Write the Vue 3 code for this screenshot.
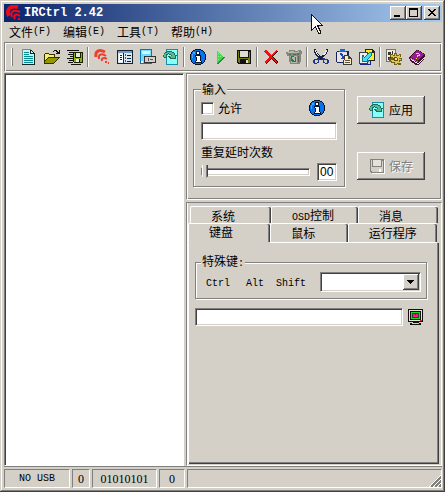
<script setup>
import { ref } from 'vue'

const menus = [
  { name: '文件', key: '(F)' },
  { name: '编辑', key: '(E)' },
  { name: '工具', key: '(T)' },
  { name: '帮助', key: '(H)' },
]
const toolGroups = [
  ['new', 'open', 'saveall'],
  ['waves', 'list', 'panel', 'apply'],
  ['info', 'play', 'floppy'],
  ['delete', 'trash'],
  ['cut', 'paste', 'export'],
  ['settings', 'book'],
]
const tabRows = [
  [
    { cjk: '系统', grow: 60 },
    { latin: 'OSD', cjk: '控制', grow: 66 },
    { cjk: '消息', grow: 59 },
  ],
  [
    { cjk: '键盘', grow: 62 },
    { cjk: '鼠标', grow: 57 },
    { cjk: '运行程序', grow: 69 },
  ],
]
const activeTab = ref('键盘')
const allowed = ref(false)
const inputCode = ref('')
const delay = ref(0)
const keyText = ref('')
const specialKey = ref('')
</script>

<template>
  <svg class="sprite" aria-hidden="true">
    <symbol id="new" viewBox="0 0 16 16" shape-rendering="crispEdges">
      <path fill="#bff4f0" d="M2 1h8l3 3v11H2z" />
      <path fill="#6f8d8c" d="M1 0h9v1H2v14H1z" />
      <path fill="#102828" d="M10 1h1v1h1v1h1v1h1v12H1v-1h12V5H9V1h1v3h2V3h-1V2h-1z" />
      <path fill="#078b91" d="M3 3h5v1H3zM3 5h5v1H3zM3 7h9v1H3zM3 9h9v1H3zM3 11h9v1H3zM3 13h9v1H3z" />
    </symbol>
    <symbol id="open" viewBox="0 0 16 16" shape-rendering="crispEdges">
      <path fill="#303000" d="M0 5h1V4h4v1h6v3h5v1h-1v1h-1v1h-1v1h-1v1h-1v1h-1v1H0z" />
      <path fill="#f6ed71" d="M1 5h4v1h5v2H4v1H3v1H2v1H1z" />
      <path fill="#969600" d="M4 9h10v1h-1v1h-1v1h-1v1h-1v1H1v-2h1v-1h1v-1h1z" />
      <path fill="#111" d="M9 2h1V1h3v1h1v1h1V1h1v4h-4V4h1V3h-1V2h-2v1H9z" />
    </symbol>
    <symbol id="saveall" viewBox="0 0 16 16" shape-rendering="crispEdges">
      <path fill="#111" d="M0 1h12v1H0zM2 3h5v1H2zM1 5h5v1H1zM3 7h3v1H3zM0 9h6v1H0zM2 11h4v1H2zM1 13h5v1H1zM4 15h10v1H4z" />
      <path fill="#182000" d="M6 3h10v11H7v-1H6z" />
      <path fill="#8eae1b" d="M7 4h1v5h6V4h1v9H7z" />
      <path fill="#e5e8dc" d="M9 4h4v4H9zM9 10h3v3H9z" />
      <path fill="#111" d="M12 10h1v3h-1z" />
    </symbol>
    <symbol id="waves" viewBox="0 0 16 16">
      <g fill="none" stroke="#ee3e2d" stroke-width="2">
        <path stroke-width="3" d="M2 8C1 2 5 0 11 3" />
        <path d="M5 10C4 5 8 4 12 7" />
        <path d="M8 12c-1-3 2-4 5-2" />
      </g>
      <path fill="#ee3e2d" d="M11 12h2v2h-2zM14 13h1v2h-1z" />
    </symbol>
    <symbol id="logo" viewBox="0 0 16 16">
      <g fill="none" stroke="#f00916" stroke-width="2">
        <path stroke-width="4" d="M3 11C0 5 4 0 12 2" />
        <path d="M6 12C4 7 7 4 14 7" />
        <path d="M9 14c-2-4 1-6 5-3" />
      </g>
      <path fill="#f00916" d="M12 13h2v2h-2z" />
    </symbol>
    <symbol id="list" viewBox="0 0 16 16" shape-rendering="crispEdges">
      <path fill="#142331" d="M0 1h16v14H0z" />
      <path fill="#d9e7f5" d="M1 4h14v10H1z" />
      <path fill="#7795c5" d="M1 2h14v2H1z" />
      <path fill="#fff" d="M2 5h4v8H2z" />
      <path fill="#142331" d="M6 4h1v10H6zM3 6h2v1H3zM3 8h2v1H3zM3 10h2v1H3zM10 6h4v1h-4zM10 9h4v1h-4zM10 12h4v1h-4z" />
      <path fill="#3062a1" d="M8 5h1v2H8zM8 8h1v2H8zM8 11h1v2H8z" />
    </symbol>
    <symbol id="panel" viewBox="0 0 16 16" shape-rendering="crispEdges">
      <path fill="#0879b5" d="M0 0h12v15H0z" />
      <path fill="#70dcff" d="M1 1h10v10H8v3H3v-2H1z" />
      <path fill="#c8faff" d="M2 2h8v3H2z" />
      <path fill="#fff" d="M1 12h2v2H1z" />
      <path fill="#303030" d="M4 7h12v7H4z" />
      <path fill="#d2d0c8" d="M5 8h10v5H5z" />
      <path fill="#555" d="M8 9h1v3H8zM10 10h3v1h-3z" />
    </symbol>
    <symbol id="apply" viewBox="0 0 16 16" shape-rendering="crispEdges">
      <path fill="#168cab" d="M3 0h12v16H3z" />
      <path fill="#87fffa" d="M4 1h10v14H4z" />
      <path fill="#1f6a58" d="M0 6h1V4h1V3h2V2h5v1h2v1h1v2h2v1h-1v3H7V9H6V8H5V7h3V6H6V5H5v1H4v3H1V8H0z" />
      <path fill="#56b894" d="M1 5h1V4h2V3h5v1h2v2h1v3H8V8H7V7h2V6H8V5H6V4H5v1H3v3H1z" />
    </symbol>
    <symbol id="info" viewBox="0 0 16 16" shape-rendering="crispEdges">
      <path fill="#071222" d="M5 0h6v1h2v1h1v1h1v2h1v6h-1v2h-1v1h-1v1h-2v1H5v-1H3v-1H2v-1H1v-2H0V5h1V3h1V2h1V1h2z" />
      <path fill="#0872ee" d="M5 1h6v1h2v1h1v2h1v6h-1v2h-1v1h-2v1H5v-1H3v-1H2v-2H1V5h1V3h1V2h2z" />
      <path fill="#45a5ff" d="M3 3h2v2H3zM2 5h1v4H2z" />
      <path fill="#071222" d="M6 2h4v4h1v6h1v2H5v-2h1V8H5V6h1z" />
      <path fill="#fff" d="M7 3h2v2H7zM6 7h4v5h1v1H6v-1h1V8H6z" />
    </symbol>
    <symbol id="play" viewBox="0 0 16 16" shape-rendering="crispEdges">
      <path fill="#42dc4e" d="M4 2h1v1h1v1h1v1h1v1h1v1h1v1h1v1h-1v1H9v1H8v1H7v1H6v1H5v1H4z" />
      <path fill="#159332" d="M12 9h-1v1h-1v1H9v1H8v1H7v1H6v1H4v-1h1v-1h1v-1h1v-1h1v-1h1V9h1V8h2z" />
      <path fill="#88f682" d="M5 4h1v1H5zM5 7h1v1H5zM7 7h1v1H7zM5 10h1v1H5z" />
    </symbol>
    <symbol id="floppy" viewBox="0 0 16 16" shape-rendering="crispEdges">
      <path fill="#111" d="M1 1h14v14H2v-1H1z" />
      <path fill="#777a10" d="M2 2h1v7h10V3h1v11H3v-1H2z" />
      <path fill="#dedbd2" d="M4 2h8v6H4z" />
      <path fill="#111" d="M4 10h8v4H4zM13 2h1v1h-1z" />
      <path fill="#dedbd2" d="M10 11h2v3h-2z" />
    </symbol>
    <symbol id="floppyoff" viewBox="0 0 16 16" shape-rendering="crispEdges">
      <path fill="#fff" d="M2 2h14v14H3v-1H2z" />
      <path fill="#858279" d="M1 1h14v14H2v-1H1z" />
      <path fill="#d4d0c8" d="M2 2h1v7h10V3h1v11H3v-1H2z" />
      <path fill="#e5e2dc" d="M4 2h8v6H4z" />
      <path fill="#fff" d="M10 11h2v3h-2z" />
    </symbol>
    <symbol id="delete" viewBox="0 0 16 16" shape-rendering="crispEdges">
      <path fill="#240d0b" d="M2 3l2-1 4 4 5-5 2 1-5 6 5 5-2 2-5-5-5 5-2-2 5-5z" />
      <path fill="#f50e10" d="M1 2l2-1 5 5 5-5h1v1L9 8l5 5-1 1-5-5-5 5-2-1 5-5-5-5z" />
    </symbol>
    <symbol id="trash" viewBox="0 0 16 16" shape-rendering="crispEdges">
      <path fill="#85877f" d="M0 3h3V1h6v1h3V1h3v1h1v3h-1v8h-1v2H4v-2H3V7H1V5H0z" />
      <path fill="#b5b8ad" d="M1 3h3V2h4v1h4V2h1v2H2zM4 7h7v7H5V8H4z" />
      <path fill="#62655d" d="M3 5h2v1H3zM7 5h3v1H7zM11 4h2v2h-2zM12 7h1v6h-1z" />
      <path fill="#0b8c3c" d="M5 7h3v1H6v2h1v1H5zM9 8h1v5H8v-1h1zM5 11h3v2H6v-1H5z" />
    </symbol>
    <symbol id="cut" viewBox="0 0 16 16" shape-rendering="crispEdges">
      <path fill="#172038" d="M1 0h2v2h1v2h1v1h1v1h1v1h2V6h1V5h1V4h1V2h1V0h2v3h-1v2h-1v1h-1v1h-1v1h-1v1h-1v2H6V9H5V8H4V7H3V6H2V4H1z" />
      <path fill="#eee" d="M2 1h1v2h1v2h1v1h1v1H5V6H4V5H3V3H2zM13 1h1v2h-1v2h-1v1h-2V5h1V4h1V2h1z" />
      <path fill="#22358d" d="M1 10h3V9h3v2H6v3H4v1H1v-1H0v-3h1zm1 1v3h2v-1h1v-2zM9 9h3v1h3v1h1v3h-1v1h-3v-1h-2v-3H9zm2 2v2h1v1h2v-3z" />
    </symbol>
    <symbol id="paste" viewBox="0 0 16 16" shape-rendering="crispEdges">
      <path fill="#17225f" d="M1 2h12v4H8v8H1v-1H0V3h1z" />
      <path fill="#e8e5dd" d="M1 3h10v3H8v7H1z" />
      <path fill="#116bd9" d="M3 2h1V0h5v2h1v1H3z" />
      <path fill="#1c3fc4" d="M4 4h2v1h1v2h1v1h1v2H5V9h1V7H5V6H4z" />
      <path fill="#3a3a30" d="M8 6h5v1h1v1h1v1h1v7H7v-5h1z" />
      <path fill="#f9edba" d="M9 7h3v3h3v5H8v-4h1z" />
      <path fill="#55533f" d="M12 7h1v2h2v1h-3zM9 11h5v1H9zM9 13h5v1H9z" />
    </symbol>
    <symbol id="export" viewBox="0 0 16 16" shape-rendering="crispEdges">
      <path fill="#222" d="M6 0h8v1h1v1h1v10H6z" />
      <path fill="#ffed19" d="M7 1h6v3h2v7H7z" />
      <path fill="#3e4147" d="M0 3h9v12H0z" />
      <path fill="#eee" d="M1 4h7v10H1z" />
      <path fill="#127889" d="M3 13V6h2v2l5-5h3v3l-5 5h2v2z" />
      <path fill="#44dcfa" d="M4 12V8h1v1l5-5h2v2L7 11h1v1z" />
      <path fill="#18228a" d="M1 15h10v-3h1v4H1z" />
    </symbol>
    <symbol id="settings" viewBox="0 0 16 16" shape-rendering="crispEdges">
      <path fill="#73736f" d="M0 0h10v13H0z" />
      <path fill="#eeece4" d="M1 1h8v11H1z" />
      <path fill="#333" d="M2 3h3v3H2zM6 2h1v5H6zM2 8h3v3H2z" />
      <path fill="#74621b" d="M8 4h3v2h2V5h2v3h-1v1h2v3h-2v2h1v2h-3v-1h-1v1H8v-2H5v-2H3V9h2V8H4V5h3v1h1z" />
      <path fill="#dec650" d="M9 5h1v2h3V6h1v3h-1v1h2v1h-2v2h1v1h-3v1H9v-2H6v-1H5v-1h2V8H5V6h2v1h2z" />
      <path fill="#625213" d="M8 8h3v1h1v3H8v-1H7V9h1z" />
      <path fill="#efe3a2" d="M9 9h2v2H9z" />
    </symbol>
    <symbol id="book" viewBox="0 0 16 16" shape-rendering="crispEdges">
      <path fill="#39112e" d="M0 8l7-7h2l7 4v2l-1 2v1l-6 6H7l-6-4z" />
      <path fill="#9d1b91" d="M2 7l6-6 7 4-6 7-8-4z" />
      <path fill="#eee" d="M2 10l7 4 6-6v1l-6 6-7-4z" />
      <path fill="#d34bc4" d="M1 9h2v1h2v1h2v1h2v1H7v-1H5v-1H3v-1H1z" />
      <path fill="#ffdf31" d="M7 4h3v1h1v2H9v1H8V6h2V5H7zM7 9h1v1H7z" />
    </symbol>
    <symbol id="monitor" viewBox="0 0 16 16" shape-rendering="crispEdges">
      <path fill="#111" d="M0 0h15v13H0zM5 13h6v1h2v2H2v-2h3z" />
      <path fill="#e4e3d9" d="M1 1h13v11H1z" />
      <path fill="#111" d="M2 2h11v9H2z" />
      <path fill="#12e01c" d="M3 3h9v7H3z" />
      <path fill="#3b3b2c" d="M4 4h7v5H4z" />
      <path fill="#ea1f84" d="M5 5h2v1h1V5h2v3H5z" />
      <path fill="#d4d0c8" d="M4 14h7v1H4z" />
      <path fill="#ed171b" d="M12 11h2v1h-2z" />
    </symbol>
  </svg>

  <main class="window">
    <header class="title-bar">
      <svg class="icon"><use href="#logo" /></svg>
      <h1>IRCtrl 2.42</h1>
      <div class="window-buttons">
        <button aria-label="Minimize"><svg viewBox="0 0 12 10" shape-rendering="crispEdges"><path d="M2 7h6v2H2z" /></svg></button>
        <button aria-label="Maximize"><svg viewBox="0 0 12 10" shape-rendering="crispEdges"><path fill-rule="evenodd" d="M1 0h9v9H1zM2 2v6h7V2z" /></svg></button>
        <button aria-label="Close" class="close"><svg viewBox="0 0 12 10" shape-rendering="crispEdges"><path d="M2 1h2v1h1v1h2V2h1V1h2v1H9v1H8v1H7v1h1v1h1v1h1v1H8V7H7V6H5v1H4v1H2V7h1V6h1V5h1V4H4V3H3V2H2z" /></svg></button>
      </div>
      <svg class="pointer" viewBox="0 0 12 20" shape-rendering="crispEdges"><path fill="#fff" stroke="#111" d="M.5.5v16l4-4 3 7h2v-2l-3-6h5z" /></svg>
    </header>

    <nav class="menu-bar">
      <button v-for="m in menus" :key="m.key">{{ m.name }}<span class="latin">{{ m.key }}</span></button>
    </nav>

    <div class="toolbar" role="toolbar">
      <div v-for="group in toolGroups" :key="group[0]" class="tool-group">
        <button v-for="name in group" :key="name" :aria-label="name"><svg class="icon"><use :href="'#' + name" /></svg></button>
      </div>
    </div>

    <div class="workspace">
      <section class="tree"></section>
      <div class="side">
        <section class="input-panel">
          <fieldset class="input-group">
            <legend>输入</legend>
            <div class="allow-row">
              <label class="allow"><input v-model="allowed" type="checkbox">允许</label>
              <svg class="icon"><use href="#info" /></svg>
            </div>
            <input v-model="inputCode" class="text-box" type="text" aria-label="输入">
            <label class="delay-label" for="delay">重复延时次数</label>
            <div class="delay-row">
              <input id="delay" v-model="delay" type="range" min="0" max="99">
              <output for="delay">{{ String(delay).padStart(2, '0') }}</output>
            </div>
          </fieldset>
          <div class="actions">
            <button><svg class="icon"><use href="#apply" /></svg>应用</button>
            <button disabled><svg class="icon"><use href="#floppyoff" /></svg>保存</button>
          </div>
        </section>

        <section class="tab-panel">
          <div role="tablist" class="tabs">
            <div v-for="(row, i) in tabRows" :key="i" class="tab-row">
              <button
                v-for="tab in row"
                :key="tab.cjk"
                role="tab"
                :aria-selected="activeTab === tab.cjk"
                :style="{ flexGrow: tab.grow }"
                @click="activeTab = tab.cjk"
              ><span v-if="tab.latin" class="latin">{{ tab.latin }}</span>{{ tab.cjk }}</button>
            </div>
          </div>
          <div class="page" role="tabpanel">
            <fieldset class="key-group">
              <legend>特殊键<span class="latin">:</span></legend>
              <div class="modifiers latin">
                <button>Ctrl</button>
                <button>Alt</button>
                <button>Shift</button>
              </div>
              <div class="combo">
                <select v-model="specialKey" aria-label="特殊键"><option value=""></option></select>
                <svg viewBox="0 0 16 16" shape-rendering="crispEdges" aria-hidden="true"><path d="M4 6h7v1h-1v1H9v1H8v1H7V9H6V8H5V7H4z" /></svg>
              </div>
            </fieldset>
            <div class="key-row">
              <input v-model="keyText" class="text-box" type="text" aria-label="键盘">
              <button aria-label="monitor"><svg class="icon"><use href="#monitor" /></svg></button>
            </div>
          </div>
        </section>
      </div>
    </div>

    <footer class="status">
      <span class="usb latin">NO USB</span>
      <span class="digit">0</span>
      <span class="bits">01010101</span>
      <span class="count">0</span>
      <span class="rest"><svg viewBox="0 0 12 12" shape-rendering="crispEdges"><path stroke="#fff" d="M0 12L12 0M4 12l8-8M8 12l4-4" /><path stroke="#808080" stroke-width="2" d="M2 12L12 2M6 12l6-6M10 12l2-2" /></svg></span>
    </footer>
  </main>
</template>

<style>
body {
  background: #d4d0c8;
}
</style>

<style scoped>
* {
  box-sizing: border-box;
}
.sprite {
  position: absolute;
  width: 0;
  height: 0;
}
.icon {
  display: block;
  flex: none;
  width: 16px;
  height: 16px;
}
button, input, select {
  margin: 0;
  padding: 0;
  border: 0;
  border-radius: 0;
  background: none;
  color: inherit;
  font: inherit;
  outline: none;
}
.window {
  display: flex;
  flex-direction: column;
  min-height: 100vh;
  padding: 4px 3px 3px 4px;
  background: #d4d0c8;
  box-shadow: inset -1px -1px #404040, inset 1px 1px #d4d0c8, inset -2px -2px #808080, inset 2px 2px #fff;
  color: #000;
  font: 12px/14px "Noto Sans CJK SC", sans-serif;
}
.latin {
  font-family: "Liberation Mono", monospace;
  font-size: 10px;
}
.title-bar {
  position: relative;
  display: flex;
  align-items: center;
  height: 18px;
  padding: 0 2px;
  background: linear-gradient(90deg, #0a246a, #a6caf0);
}
h1 {
  flex: 1;
  margin: 0 0 0 2px;
  color: #fff;
  font: bold 12px/18px "Liberation Mono", monospace;
}
.window-buttons {
  display: flex;
}
.window-buttons button {
  width: 16px;
  height: 14px;
  padding: 1px;
  background: #d4d0c8;
  box-shadow: inset -1px -1px #404040, inset 1px 1px #fff, inset -2px -2px #808080;
}
.window-buttons .close {
  margin-left: 2px;
}
.window-buttons svg {
  display: block;
  width: 12px;
  height: 10px;
  margin: 1px;
}
.pointer {
  position: absolute;
  top: 10px;
  left: 70%;
  width: 12px;
  height: 20px;
}
.menu-bar {
  display: flex;
  gap: 12px;
  height: 20px;
  padding: 0 5px;
}
.menu-bar button {
  display: flex;
  align-items: center;
}
.toolbar {
  display: flex;
  align-items: center;
  height: 30px;
  padding-left: 12px;
  border: 1px solid #808080;
  border-right-color: #fff;
  border-bottom-color: #fff;
  box-shadow: inset 1px 1px #fff, inset -1px -1px #808080;
  background: linear-gradient(90deg, #fff 1px, #808080 1px) 6px 5px / 2px 18px no-repeat;
}
.tool-group {
  display: flex;
}
.tool-group + .tool-group {
  padding-left: 4px;
  background: linear-gradient(90deg, #808080 1px, #fff 1px) 1px 0 / 2px 100% no-repeat;
}
.tool-group button {
  display: flex;
  align-items: center;
  justify-content: center;
  width: 23px;
  height: 20px;
}
.workspace {
  display: grid;
  flex: 1;
  grid-template-columns: 180fr 256fr;
  gap: 2px;
  margin-top: 1px;
  border-bottom: 1px solid #808080;
}
.tree {
  border: 1px solid #808080;
  border-right-color: #fff;
  border-bottom-color: #fff;
  box-shadow: inset 1px 1px #404040;
  background: #fff;
}
.side {
  display: flex;
  flex-direction: column;
  gap: 2px;
}
.input-panel {
  display: flex;
  justify-content: space-between;
  padding: 8px 16px 12px 6px;
  border: 1px solid #808080;
  border-right-color: #fff;
  border-bottom-color: #fff;
  box-shadow: inset 1px 1px #fff, inset -1px -1px #808080;
}
fieldset {
  min-width: 0;
  margin: 0;
  border: 1px solid #808080;
  box-shadow: 1px 1px #fff, inset 1px 1px #fff;
}
legend {
  padding: 0 1px;
  background: #d4d0c8;
}
.input-group {
  display: flex;
  flex-direction: column;
  width: 152px;
  padding: 3px 7px 5px 7px;
}
.allow-row {
  display: flex;
  align-items: center;
  justify-content: space-between;
  height: 18px;
  padding-right: 12px;
}
.allow {
  display: flex;
  align-items: center;
  gap: 4px;
}
.allow input {
  appearance: none;
  width: 13px;
  height: 13px;
}
.allow input,
.text-box,
output,
.combo {
  background: #fff;
  border: 1px solid #808080;
  border-right-color: #fff;
  border-bottom-color: #fff;
  box-shadow: inset 1px 1px #404040, inset -1px -1px #d4d0c8;
}
.allow input:checked {
  background: #000 content-box;
  padding: 3px;
}
.text-box {
  width: 100%;
  height: 18px;
  padding: 0 3px;
}
.input-group .text-box {
  margin: 5px 0;
}
.delay-label {
  margin-bottom: 4px;
}
.delay-row {
  display: flex;
  align-items: center;
  gap: 7px;
}
.delay-row input {
  appearance: none;
  flex: 1;
  min-width: 0;
  height: 14px;
}
.delay-row input::-webkit-slider-runnable-track {
  height: 8px;
  border: 1px solid #808080;
  border-right-color: #fff;
  border-bottom-color: #fff;
  background: #fff;
  box-shadow: inset 1px 1px #404040, inset -1px -1px #d4d0c8;
}
.delay-row input::-webkit-slider-thumb {
  appearance: none;
  width: 6px;
  height: 14px;
  margin-top: -4px;
  background: linear-gradient(90deg, #fff 1px, #d4d0c8 1px 4px, #808080 4px 5px, #404040 5px);
  clip-path: polygon(0 0, 100% 0, 100% 80%, 50% 100%, 0 80%);
}
output {
  width: 20px;
  height: 18px;
  padding-left: 2px;
  font: 12px/17px "Liberation Sans", sans-serif;
}
.actions {
  display: flex;
  flex-direction: column;
  gap: 28px;
  padding-top: 14px;
}
.actions button {
  display: flex;
  align-items: center;
  justify-content: center;
  gap: 4px;
  width: 68px;
  height: 28px;
  box-shadow: inset -1px -1px #404040, inset 1px 1px #fff, inset -2px -2px #808080;
}
.actions button:disabled {
  color: #808080;
  text-shadow: 1px 1px #fff;
}
.tab-panel {
  display: flex;
  flex: 1;
  flex-direction: column;
  padding: 3px 2px 1px 1px;
  border: 1px solid #808080;
  border-right-color: #fff;
  border-bottom-color: #fff;
  box-shadow: inset 1px 0 #fff;
}
.tab-row {
  display: flex;
}
.tab-row:first-child {
  padding: 0 1px 0 2px;
}
.tab-row:last-child {
  padding-right: 2px;
}
.tab-row button {
  flex: 1 1 0;
  height: 17px;
  padding: 2px 0 0 20px;
  border: solid #fff;
  border-width: 1px 0 0 1px;
  border-radius: 2px 2px 0 0;
  box-shadow: inset -1px 0 #404040, inset -2px 0 #808080;
  line-height: 12px;
  text-align: left;
  white-space: nowrap;
}
.tab-row:last-child button {
  height: 20px;
  padding-bottom: 2px;
  border-bottom: 1px solid #fff;
}
.tab-row:last-child button[aria-selected="true"] {
  padding-top: 1px;
  padding-bottom: 3px;
  border-bottom-color: transparent;
}
.page {
  flex: 1;
  padding: 11px 12px 8px 6px;
  border-left: 1px solid #fff;
  box-shadow: inset -1px -1px #404040, inset -2px -2px #808080;
}
.key-group {
  display: flex;
  align-items: center;
  justify-content: space-between;
  padding: 1px 5px 6px 5px;
}
.modifiers {
  display: flex;
  gap: 12px;
  padding: 4px 0 0 5px;
}
.modifiers button:nth-child(2) {
  padding-left: 4px;
}
.combo {
  position: relative;
  width: 101px;
  height: 20px;
}
.combo select {
  display: block;
  appearance: none;
  width: 100%;
  height: 100%;
  padding: 0 18px 0 3px;
}
.combo svg {
  position: absolute;
  top: 1px;
  right: 1px;
  width: 16px;
  height: 16px;
  background: #d4d0c8;
  box-shadow: inset -1px -1px #404040, inset 1px 1px #fff, inset -2px -2px #808080;
  pointer-events: none;
}
.key-row {
  display: flex;
  align-items: center;
  gap: 5px;
  padding: 9px 3px 0 0;
}
.status {
  display: flex;
  gap: 2px;
  height: 22px;
  padding: 2px 0 1px;
  font-family: "Liberation Serif", serif;
}
.status span {
  border: 1px solid #808080;
  border-right-color: #fff;
  border-bottom-color: #fff;
  line-height: 18px;
  text-align: center;
}
.status .usb {
  width: 66px;
}
.status .digit {
  width: 18px;
}
.status .bits {
  width: 65px;
}
.status .count {
  width: 26px;
}
.status .rest {
  display: flex;
  flex: 1;
  align-items: flex-end;
  justify-content: flex-end;
}
.rest svg {
  width: 12px;
  height: 12px;
}
</style>
